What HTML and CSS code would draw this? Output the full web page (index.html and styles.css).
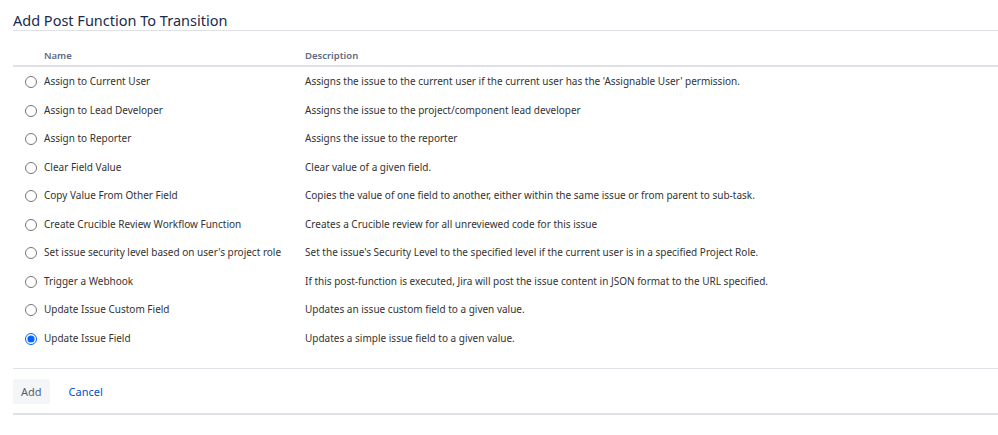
FILE: index.html
```html
<!DOCTYPE html>
<html>
<head>
  <title>Add Post Function To Transition</title>
  <link rel="stylesheet" href="styles.css">
</head>
<body>
  <div class="dialog">
    <h2 class="dialog-title">Add Post Function To Transition</h2>

    <table class="functions">
      <thead>
        <tr>
          <th class="col-radio"></th>
          <th class="col-name">Name</th>
          <th>Description</th>
        </tr>
      </thead>
      <tbody>
        <tr>
          <td class="col-radio"><input type="radio" name="fn" id="fn1"></td>
          <td class="col-name"><label for="fn1">Assign to Current User</label></td>
          <td>Assigns the issue to the current user if the current user has the 'Assignable User' permission.</td>
        </tr>
        <tr>
          <td class="col-radio"><input type="radio" name="fn" id="fn2"></td>
          <td class="col-name"><label for="fn2">Assign to Lead Developer</label></td>
          <td>Assigns the issue to the project/component lead developer</td>
        </tr>
        <tr>
          <td class="col-radio"><input type="radio" name="fn" id="fn3"></td>
          <td class="col-name"><label for="fn3">Assign to Reporter</label></td>
          <td>Assigns the issue to the reporter</td>
        </tr>
        <tr>
          <td class="col-radio"><input type="radio" name="fn" id="fn4"></td>
          <td class="col-name"><label for="fn4">Clear Field Value</label></td>
          <td>Clear value of a given field.</td>
        </tr>
        <tr>
          <td class="col-radio"><input type="radio" name="fn" id="fn5"></td>
          <td class="col-name"><label for="fn5">Copy Value From Other Field</label></td>
          <td>Copies the value of one field to another, either within the same issue or from parent to sub-task.</td>
        </tr>
        <tr>
          <td class="col-radio"><input type="radio" name="fn" id="fn6"></td>
          <td class="col-name"><label for="fn6">Create Crucible Review Workflow Function</label></td>
          <td>Creates a Crucible review for all unreviewed code for this issue</td>
        </tr>
        <tr>
          <td class="col-radio"><input type="radio" name="fn" id="fn7"></td>
          <td class="col-name"><label for="fn7">Set issue security level based on user's project role</label></td>
          <td>Set the issue's Security Level to the specified level if the current user is in a specified Project Role.</td>
        </tr>
        <tr>
          <td class="col-radio"><input type="radio" name="fn" id="fn8"></td>
          <td class="col-name"><label for="fn8">Trigger a Webhook</label></td>
          <td>If this post-function is executed, Jira will post the issue content in JSON format to the URL specified.</td>
        </tr>
        <tr>
          <td class="col-radio"><input type="radio" name="fn" id="fn9"></td>
          <td class="col-name"><label for="fn9">Update Issue Custom Field</label></td>
          <td>Updates an issue custom field to a given value.</td>
        </tr>
        <tr>
          <td class="col-radio"><input type="radio" name="fn" id="fn10" checked></td>
          <td class="col-name"><label for="fn10">Update Issue Field</label></td>
          <td>Updates a simple issue field to a given value.</td>
        </tr>
      </tbody>
    </table>

    <div class="buttons">
      <button class="btn">Add</button>
      <a class="cancel" href="#">Cancel</a>
    </div>
  </div>
</body>
</html>
```

FILE: styles.css
```css
body {
  margin: 0;
  font-family: 'Noto Sans', 'Open Sans', Arial, sans-serif;
  color: #172b4d;
  background: #fff;
}
.dialog {
  padding: 11px 0 0 13px;
}
.dialog-title {
  margin: 0;
  font-size: 14.5px;
  font-weight: 400;
  line-height: 18px;
  padding-bottom: 1px;
  border-bottom: 1px solid #dfe1e6;
}
.functions {
  width: 100%;
  border-collapse: collapse;
  font-size: 10px;
}
.functions th {
  text-align: left;
  font-size: 9.5px;
  font-weight: 600;
  color: #5e6c84;
  height: 20px;
  padding: 14px 0 0;
  border-bottom: 2px solid #dfe1e6;
}
.functions td {
  height: 28.5px;
  padding: 0;
  vertical-align: middle;
  color: #333;
}
.col-radio {
  width: 31px;
  text-align: center;
}
.col-name {
  width: 261px;
}
.functions input[type=radio] {
  width: 12px;
  height: 12px;
  margin: 0 0 0 4px;
  vertical-align: middle;
  accent-color: #0065ff;
}
.buttons {
  margin-top: 16px;
  padding: 10px 0 9px;
  border-top: 1px solid #dfe1e6;
  border-bottom: 2px solid #dfe1e6;
  display: flex;
  align-items: center;
  gap: 19px;
}
.btn {
  font-family: inherit;
  font-size: 11px;
  color: #505f79;
  background: #f4f5f7;
  border: none;
  border-radius: 3px;
  height: 25px;
  padding: 0 8px;
}
.cancel {
  font-size: 11px;
  color: #0052cc;
  text-decoration: none;
}
```
